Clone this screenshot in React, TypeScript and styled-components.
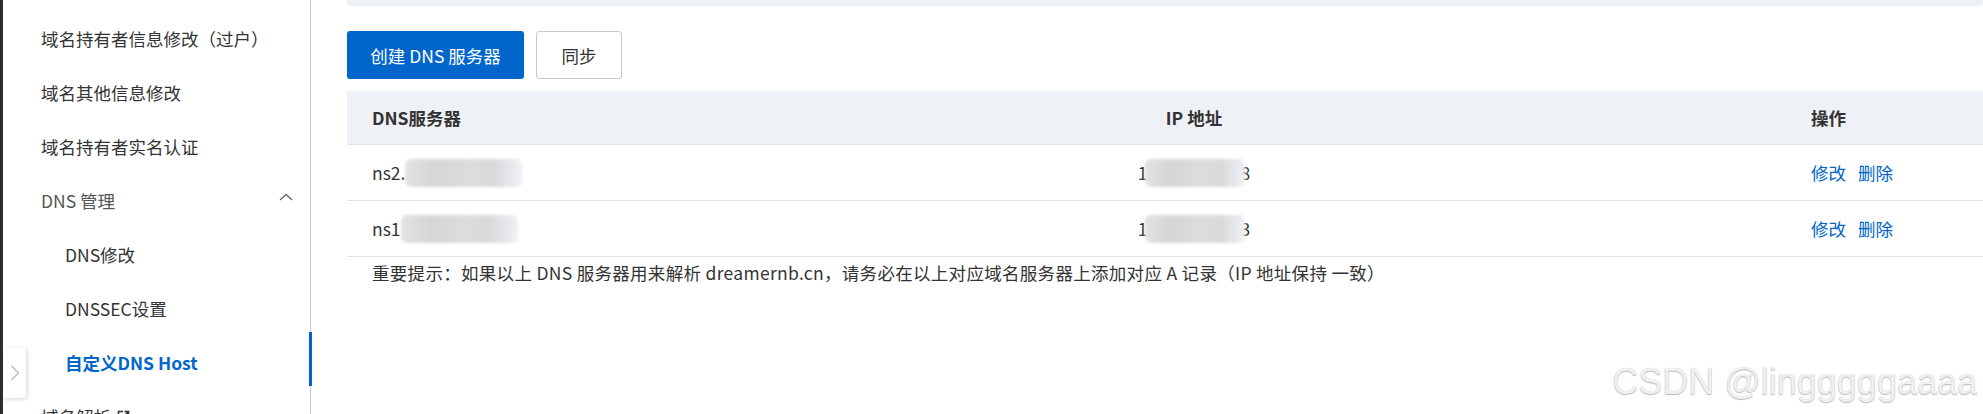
import styled, { createGlobalStyle } from "styled-components";

const GlobalStyle = createGlobalStyle`
  html, body {
    margin: 0;
    padding: 0;
    background: #fff;
  }
  body {
    font-family: "Noto Sans CJK SC", "Noto Sans", sans-serif;
    color: #333;
  }
`;

interface MenuEntry {
  label: string;
  level: 1 | 2;
  active?: boolean;
  group?: boolean;
  external?: boolean;
}

const menu: MenuEntry[] = [
  { label: "域名持有者信息修改（过户）", level: 1 },
  { label: "域名其他信息修改", level: 1 },
  { label: "域名持有者实名认证", level: 1 },
  { label: "DNS 管理", level: 1, group: true },
  { label: "DNS修改", level: 2 },
  { label: "DNSSEC设置", level: 2 },
  { label: "自定义DNS Host", level: 2, active: true },
  { label: "域名解析", level: 1, external: true },
];

const servers = [
  { prefix: "ns2.", ipHead: "1", ipTail: "8" },
  { prefix: "ns1", ipHead: "1", ipTail: "3" },
];

export default function App() {
  return (
    <Page>
      <GlobalStyle />
      <EdgeStrip />
      <Sidebar>
        {menu.map((m) => (
          <MenuItem key={m.label} $level={m.level} $active={m.active} $group={m.group}>
            <span>{m.label}</span>
            {m.external && (
              <ExtIcon width="13" height="13" viewBox="0 0 13 13">
                <path d="M6 1.5H1.5v10h10V7" fill="none" stroke="#333" strokeWidth="1.6" />
                <path d="M5.5 7.5L11.5 1.5M7.5 1.5h4v4" fill="none" stroke="#333" strokeWidth="1.6" />
              </ExtIcon>
            )}
            {m.group && (
              <Chevron width="14" height="8" viewBox="0 0 14 8">
                <polyline points="1,7 7,1.5 13,7" fill="none" stroke="#666" strokeWidth="1.3" />
              </Chevron>
            )}
          </MenuItem>
        ))}
      </Sidebar>

      <Main>
        <TopPanel />
        <Toolbar>
          <PrimaryButton>创建 DNS 服务器</PrimaryButton>
          <GhostButton>同步</GhostButton>
        </Toolbar>

        <Table>
          <HeaderRow>
            <HeadCell>DNS服务器</HeadCell>
            <HeadCell $center>IP 地址</HeadCell>
            <HeadCell>操作</HeadCell>
          </HeaderRow>
          {servers.map((s) => (
            <Row key={s.prefix}>
              <Cell>
                {s.prefix}
                <Redacted $width={117} />
              </Cell>
              <Cell $center>
                {s.ipHead}
                <Redacted $width={100} $tight />
                {s.ipTail}
              </Cell>
              <Cell>
                <LinkText>修改</LinkText>
                <LinkText>删除</LinkText>
              </Cell>
            </Row>
          ))}
        </Table>

        <Note>
          重要提示：如果以上 DNS 服务器用来解析 dreamernb.cn，请务必在以上对应域名服务器上添加对应 A 记录（IP 地址保持 一致）
        </Note>
      </Main>

      <CollapseTab>
        <svg width="10" height="16" viewBox="0 0 10 16">
          <polyline points="1.5,1 8.5,8 1.5,15" fill="none" stroke="#bbb" strokeWidth="1.4" />
        </svg>
      </CollapseTab>

      <Watermark>CSDN @lingggggaaaa</Watermark>
    </Page>
  );
}

const Page = styled.div`
  position: relative;
  display: flex;
  width: 1983px;
  height: 414px;
  overflow: hidden;
`;

const EdgeStrip = styled.div`
  width: 3px;
  flex-shrink: 0;
  background: #2e2e2e;
`;

const Sidebar = styled.nav`
  width: 307px;
  flex-shrink: 0;
  padding-top: 11px;
  border-right: 1px solid #c9cdd4;
  display: flex;
  flex-direction: column;
`;

const MenuItem = styled.div<{ $level: 1 | 2; $active?: boolean; $group?: boolean }>`
  position: relative;
  flex-shrink: 0;
  height: 54px;
  display: flex;
  align-items: center;
  padding-left: ${({ $level }) => ($level === 1 ? 38 : 62)}px;
  padding-right: 17px;
  font-size: 17.5px;
  font-weight: ${({ $active }) => ($active ? 700 : 400)};
  color: ${({ $active, $group }) => ($active ? "#0066cc" : $group ? "#555" : "#333")};

  ${({ $active }) =>
    $active &&
    `
    &::after {
      content: "";
      position: absolute;
      right: -2px;
      top: -3px;
      width: 3px;
      height: 54px;
      background: #0066cc;
    }
  `}
`;

const Chevron = styled.svg`
  margin-left: auto;
  margin-top: -6px;
`;

const ExtIcon = styled.svg`
  margin-left: 6px;
`;

const Main = styled.main`
  flex: 1;
  min-width: 0;
  padding-left: 36px;
  display: flex;
  flex-direction: column;
`;

const TopPanel = styled.div`
  height: 6px;
  background: #eef1f5;
  border-radius: 0 0 4px 4px;
`;

const Toolbar = styled.div`
  display: flex;
  gap: 12px;
  margin-top: 25px;
`;

const PrimaryButton = styled.button`
  width: 177px;
  height: 48px;
  border: none;
  border-radius: 3px;
  background: #0066cc;
  color: #fff;
  font-family: inherit;
  font-size: 17.5px;
  cursor: pointer;
`;

const GhostButton = styled.button`
  width: 86px;
  height: 48px;
  border: 1px solid #c8c8c8;
  border-radius: 3px;
  background: #fff;
  color: #333;
  font-family: inherit;
  font-size: 17.5px;
  cursor: pointer;
`;

const Table = styled.div`
  margin-top: 12px;
  display: flex;
  flex-direction: column;
`;

const gridCols = `
  display: grid;
  grid-template-columns: 255px 1fr 197px;
  align-items: center;
`;

const HeaderRow = styled.div`
  ${gridCols};
  height: 53px;
  background: #eef1f6;
  border-bottom: 1px solid #e1e3e6;
`;

const Row = styled.div`
  ${gridCols};
  height: 55px;
  border-bottom: 1px solid #e4e4e4;
`;

const HeadCell = styled.div<{ $center?: boolean }>`
  padding-left: ${({ $center }) => ($center ? 0 : 25)}px;
  text-align: ${({ $center }) => ($center ? "center" : "left")};
  font-size: 17.5px;
  font-weight: 700;
  color: #333;
`;

const Cell = styled.div<{ $center?: boolean }>`
  display: flex;
  align-items: center;
  justify-content: ${({ $center }) => ($center ? "center" : "flex-start")};
  padding-left: ${({ $center }) => ($center ? 0 : 25)}px;
  font-size: 17.5px;
  color: #333;
`;

const Redacted = styled.span<{ $width: number; $tight?: boolean }>`
  display: inline-block;
  width: ${({ $width }) => $width}px;
  height: 28px;
  margin: ${({ $tight }) => ($tight ? "0 -4px 0 -3px" : "0")};
  border-radius: 6px;
  background: linear-gradient(
    90deg,
    #e2e2e2 0%,
    #d6d6d6 25%,
    #dcdcdc 55%,
    #d9d9d9 75%,
    #e8e9ee 92%,
    #f0f1f4 100%
  );
  filter: blur(1.5px);
`;

const LinkText = styled.span`
  color: #0066cc;
  margin-right: 12px;
  cursor: pointer;
`;

const Note = styled.p`
  margin: 0;
  padding: 5px 0 0 25px;
  line-height: 22px;
  font-size: 17.5px;
  letter-spacing: 0.3px;
  color: #333;
`;

const CollapseTab = styled.div`
  position: absolute;
  left: 3px;
  top: 348px;
  width: 23px;
  height: 50px;
  display: flex;
  align-items: center;
  justify-content: center;
  background: #fff;
  border-radius: 0 4px 4px 0;
  box-shadow: 1px 1px 4px rgba(0, 0, 0, 0.18);
`;

const Watermark = styled.div`
  position: absolute;
  right: 6px;
  top: 364px;
  font-family: "Liberation Sans", Arial, sans-serif;
  font-size: 36px;
  line-height: 1;
  color: #f0f0f0;
  text-shadow: 0 1px 1px rgba(0, 0, 0, 0.25), 0 0 1px rgba(0, 0, 0, 0.18);
  pointer-events: none;
`;
